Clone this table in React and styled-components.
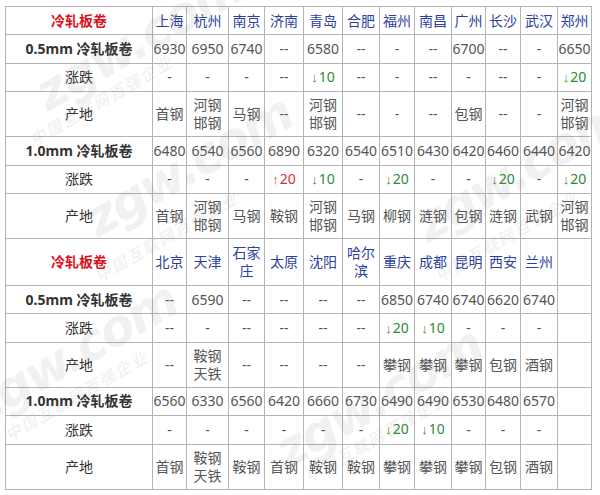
import React from 'react'
import styled, { createGlobalStyle } from 'styled-components'

const GlobalStyle = createGlobalStyle`
  body {
    margin: 0;
    background: #fff;
    font-family: "Noto Sans", "Noto Sans CJK SC", sans-serif;
  }
`

const Page = styled.div`
  position: relative;
  padding: 6px 0 0 5px;
  overflow: hidden;
  height: 495px;
  box-sizing: border-box;
`

const Table = styled.table`
  border-collapse: collapse;
  table-layout: fixed;
  width: 587px;
  border: 1.5px solid #777;
`

const Td = styled.td`
  border: 1px solid #b4b4b4;
  padding: 4px 0;
  height: ${(p) => (p.$tall ? '35.8px' : '19.4px')};
  text-align: center;
  vertical-align: middle;
  font-size: 14px;
  line-height: 18px;
  white-space: pre-line;
  color: ${(p) => (p.$tone === 'up' ? '#d9302a' : p.$tone === 'down' ? '#2f8a36' : '#555')};
`

const Arrow = styled.span`
  font-family: "Liberation Sans", sans-serif;
  font-size: 13px;
  margin-right: 1px;
`

const CityTd = styled(Td)`
  color: #2c3f9e;
  height: ${(p) => (p.$tall ? '38px' : '19.4px')};
`

const LabelTd = styled(Td)`
  color: ${(p) => (p.$title ? '#d8131c' : '#333')};
  font-weight: ${(p) => (p.$bold ? 700 : 400)};
`

const Watermark = styled.div`
  position: absolute;
  pointer-events: none;
  transform: rotate(-30deg);
  transform-origin: left top;
  white-space: nowrap;
  color: rgba(120, 120, 120, 0.1);
  font-family: "DejaVu Sans", "Noto Sans CJK SC", sans-serif;
  font-weight: 700;
  font-style: italic;
  font-size: ${(p) => p.$size}px;
  letter-spacing: ${(p) => (p.$size > 30 ? '-2px' : '2px')};
`

const widths = [147, 34, 42, 36, 39, 39, 37, 35, 37, 34, 35, 37, 34]

const sections = [
  {
    cities: ['上海', '杭州', '南京', '济南', '青岛', '合肥', '福州', '南昌', '广州', '长沙', '武汉', '郑州'],
    rows: [
      { label: '0.5mm 冷轧板卷', cells: ['6930', '6950', '6740', '--', '6580', '--', '-', '--', '6700', '--', '-', '6650'] },
      { label: '涨跌', cells: ['-', '-', '-', '--', '↓10', '--', '-', '--', '-', '--', '-', '↓20'] },
      { label: '产地', tall: true, cells: ['首钢', '河钢\n邯钢', '马钢', '--', '河钢\n邯钢', '--', '-', '--', '包钢', '--', '-', '河钢\n邯钢'] },
      { label: '1.0mm 冷轧板卷', cells: ['6480', '6540', '6560', '6890', '6320', '6540', '6510', '6430', '6420', '6460', '6440', '6420'] },
      { label: '涨跌', cells: ['-', '-', '-', '↑20', '↓10', '-', '↓20', '-', '-', '↓20', '-', '↓20'] },
      { label: '产地', tall: true, cells: ['首钢', '河钢\n邯钢', '马钢', '鞍钢', '河钢\n邯钢', '马钢', '柳钢', '涟钢', '包钢', '涟钢', '武钢', '河钢\n邯钢'] },
    ],
  },
  {
    cities: ['北京', '天津', '石家\n庄', '太原', '沈阳', '哈尔\n滨', '重庆', '成都', '昆明', '西安', '兰州', ''],
    rows: [
      { label: '0.5mm 冷轧板卷', cells: ['--', '6590', '--', '--', '--', '--', '6850', '6740', '6740', '6620', '6740', ''] },
      { label: '涨跌', cells: ['--', '-', '--', '--', '--', '--', '↓20', '↓10', '-', '-', '-', ''] },
      { label: '产地', tall: true, cells: ['--', '鞍钢\n天铁', '--', '--', '--', '--', '攀钢', '攀钢', '攀钢', '包钢', '酒钢', ''] },
      { label: '1.0mm 冷轧板卷', cells: ['6560', '6330', '6560', '6420', '6660', '6730', '6490', '6490', '6530', '6480', '6570', ''] },
      { label: '涨跌', cells: ['-', '-', '-', '-', '-', '-', '↓20', '↓10', '-', '-', '-', ''] },
      { label: '产地', tall: true, cells: ['首钢', '鞍钢\n天铁', '鞍钢', '首钢', '鞍钢', '鞍钢', '攀钢', '攀钢', '攀钢', '包钢', '酒钢', ''] },
    ],
  },
]

const toneOf = (v) => (v.startsWith('↑') ? 'up' : v.startsWith('↓') ? 'down' : undefined)

const Value = ({ v }) =>
  toneOf(v) ? (
    <>
      <Arrow>{v[0]}</Arrow>
      {v.slice(1)}
    </>
  ) : (
    v
  )

// faint site watermarks lying over the table
const marks = [
  { x: 25, y: 72, big: true },
  { x: 25, y: 130 },
  { x: 75, y: 198, big: true },
  { x: 90, y: 266 },
  { x: 405, y: 203, big: true },
  { x: 430, y: 266 },
  { x: -40, y: 385, big: true },
  { x: 0, y: 425 },
  { x: 265, y: 430, big: true },
  { x: 300, y: 467 },
]

export default function App() {
  return (
    <Page>
      <GlobalStyle />
      <Table>
        <colgroup>
          {widths.map((w, i) => (
            <col key={i} style={{ width: w }} />
          ))}
        </colgroup>
        <tbody>
          {sections.map((sec, si) => (
            <React.Fragment key={si}>
              <tr>
                <LabelTd $title $bold>冷轧板卷</LabelTd>
                {sec.cities.map((c, i) => (
                  <CityTd key={i} $tall={c.includes('\n')}>{c}</CityTd>
                ))}
              </tr>
              {sec.rows.map((row, ri) => (
                <tr key={ri}>
                  <LabelTd $bold={row.label.includes('mm')} $tall={row.tall}>{row.label}</LabelTd>
                  {row.cells.map((v, i) => (
                    <Td key={i} $tall={row.tall} $tone={toneOf(v)}>
                      <Value v={v} />
                    </Td>
                  ))}
                </tr>
              ))}
            </React.Fragment>
          ))}
        </tbody>
      </Table>
      {marks.map((m, i) => (
        <Watermark key={i} $size={m.big ? 50 : 16} style={{ left: m.x, top: m.y }}>
          {m.big ? 'zgw.com' : '中国互联网百强企业'}
        </Watermark>
      ))}
    </Page>
  )
}
